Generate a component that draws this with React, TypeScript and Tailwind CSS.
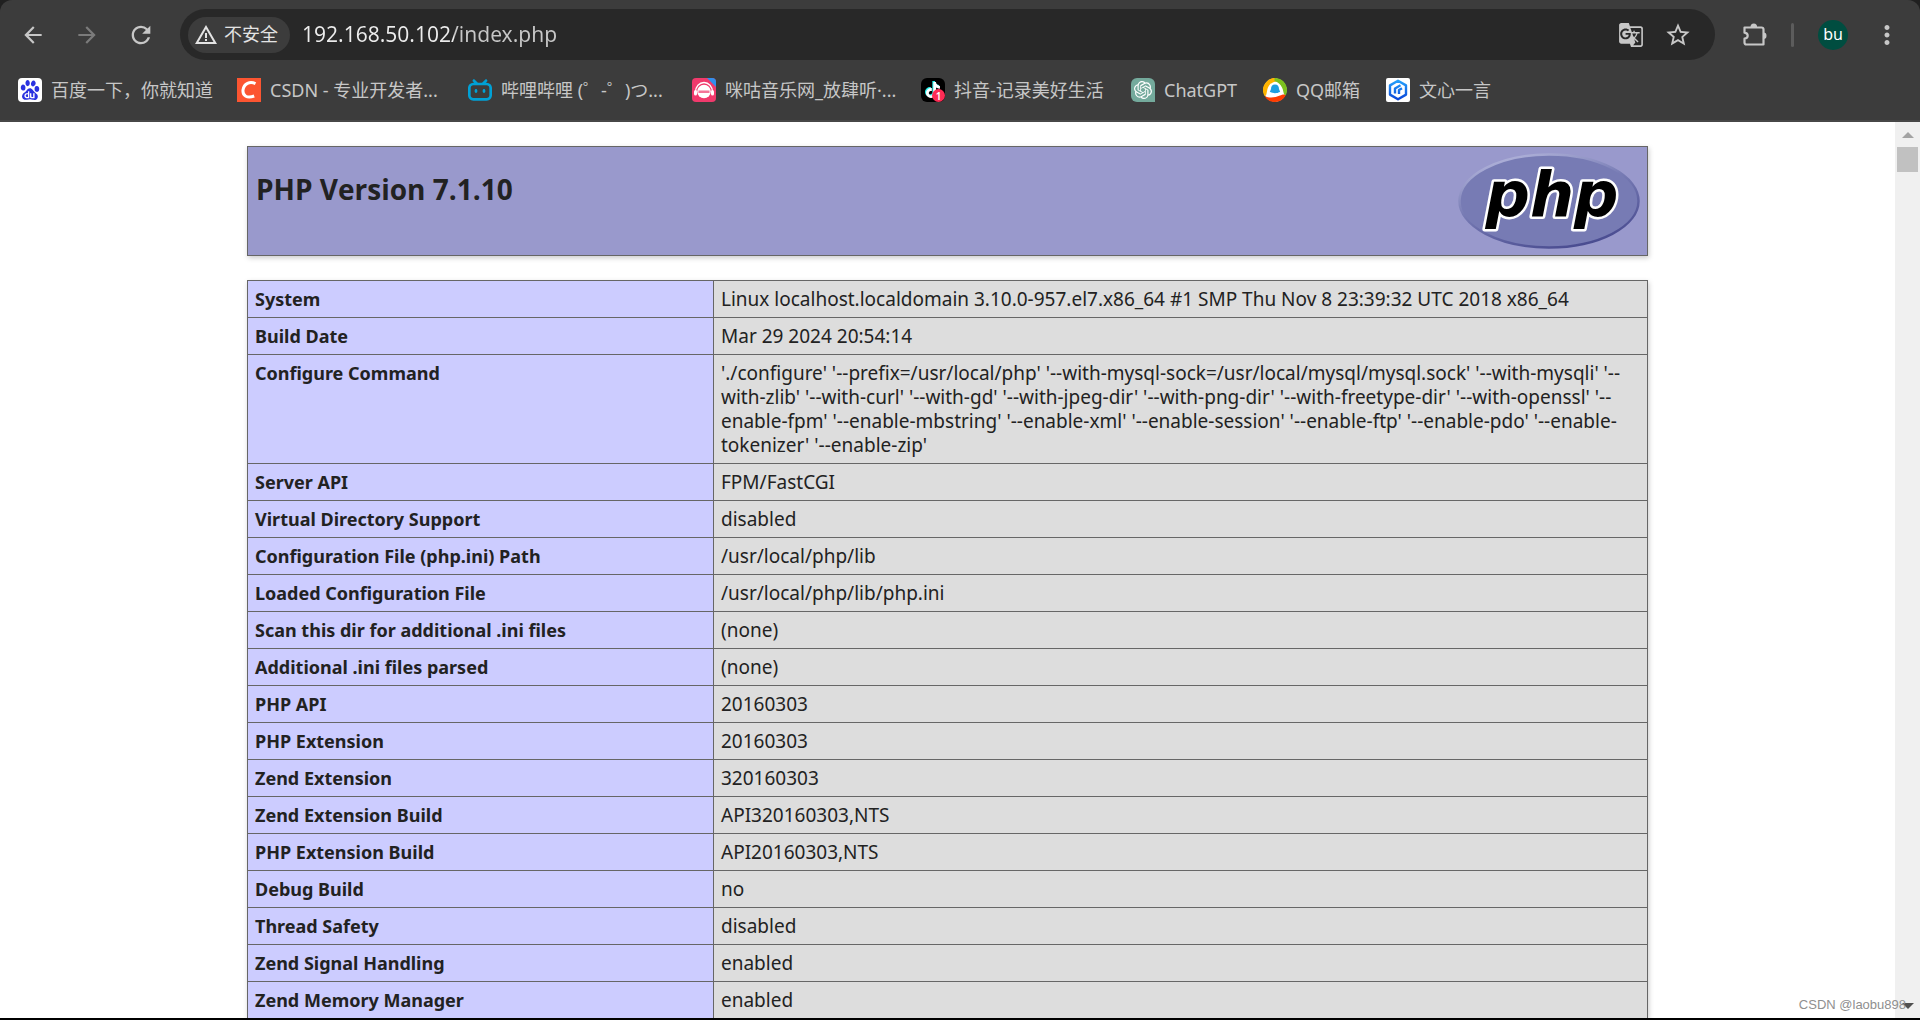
import React from "react";
import {
  MdArrowBack,
  MdArrowForward,
  MdGTranslate,
  MdMoreVert,
  MdRefresh,
  MdStarBorder,
  MdWarningAmber,
} from "react-icons/md";
import { SiBaidu, SiBilibili, SiOpenai, SiTiktok } from "react-icons/si";

const rows: [string, string[]][] = [
  ["System", ["Linux localhost.localdomain 3.10.0-957.el7.x86_64 #1 SMP Thu Nov 8 23:39:32 UTC 2018 x86_64"]],
  ["Build Date", ["Mar 29 2024 20:54:14"]],
  [
    "Configure Command",
    [
      "'./configure' '--prefix=/usr/local/php' '--with-mysql-sock=/usr/local/mysql/mysql.sock' '--with-mysqli' '--",
      "with-zlib' '--with-curl' '--with-gd' '--with-jpeg-dir' '--with-png-dir' '--with-freetype-dir' '--with-openssl' '--",
      "enable-fpm' '--enable-mbstring' '--enable-xml' '--enable-session' '--enable-ftp' '--enable-pdo' '--enable-",
      "tokenizer' '--enable-zip'",
    ],
  ],
  ["Server API", ["FPM/FastCGI"]],
  ["Virtual Directory Support", ["disabled"]],
  ["Configuration File (php.ini) Path", ["/usr/local/php/lib"]],
  ["Loaded Configuration File", ["/usr/local/php/lib/php.ini"]],
  ["Scan this dir for additional .ini files", ["(none)"]],
  ["Additional .ini files parsed", ["(none)"]],
  ["PHP API", ["20160303"]],
  ["PHP Extension", ["20160303"]],
  ["Zend Extension", ["320160303"]],
  ["Zend Extension Build", ["API320160303,NTS"]],
  ["PHP Extension Build", ["API20160303,NTS"]],
  ["Debug Build", ["no"]],
  ["Thread Safety", ["disabled"]],
  ["Zend Signal Handling", ["enabled"]],
  ["Zend Memory Manager", ["enabled"]],
];

function BaiduIcon() {
  return (
    <span className="flex size-6 items-center justify-center rounded-sm bg-white">
      <SiBaidu className="size-5 text-[#2a32e0]" />
    </span>
  );
}

function CsdnIcon() {
  return (
    <svg viewBox="0 0 24 24" className="size-6">
      <rect width="24" height="24" fill="#fc5531" />
      <path d="M18.5 5.6C13 2.8 6.8 5.4 6 12c-.6 6 4.2 8.6 11.2 6" fill="none" stroke="#fff" strokeWidth="3" />
    </svg>
  );
}

function MiguIcon() {
  return (
    <svg viewBox="0 0 24 24" className="size-6">
      <rect width="24" height="24" rx="4" fill="#f03a6c" />
      <path d="M15 0h5a4 4 0 0 1 4 4v5z" fill="#2f8fee" />
      <path d="M3.500 14a8.500 9.500 0 0 1 17 0" fill="none" stroke="#fff" strokeWidth="1.300" />
      <circle cx="12" cy="13.500" r="6.800" fill="#fff" />
      <rect x="2" y="12" width="3" height="5.500" rx="1.500" fill="#fff" />
      <rect x="19" y="12" width="3" height="5.500" rx="1.500" fill="#fff" />
      <rect x="6.500" y="12.500" width="11" height="2.500" fill="#f03a6c" opacity="0.7" />
    </svg>
  );
}

function DouyinIcon() {
  return (
    <span className="relative flex size-6 items-center justify-center rounded-md bg-black">
      <SiTiktok className="size-4 text-white drop-shadow-[-1px_-1px_0_#25f4ee]" />
      <span className="absolute right-0 bottom-0 flex size-[13px] items-center justify-center rounded-full bg-[#fe2c55] text-[10px] leading-none font-semibold text-white">
        1
      </span>
    </span>
  );
}

function ChatIcon() {
  return (
    <span className="flex size-6 items-center justify-center rounded-md rounded-br-none bg-[#74aa9c]">
      <SiOpenai className="size-[18px] text-white" />
    </span>
  );
}

function QQMailIcon() {
  return (
    <svg viewBox="0 0 24 24" className="size-6">
      <circle cx="12" cy="12" r="11.500" fill="#fff" />
      <path d="M14 .2A12 12 0 0 0 1.600 18C4 18.500 3.500 13 5 9.500 6.800 5.500 10 3.500 15 3.200z" fill="#ffb400" />
      <path d="M11.500 0a12 12 0 0 1 11.300 17.300C20.500 18 20.800 13 19 9.500 17.500 6.300 15 4 11.500 3.200z" fill="#7cc11e" />
      <path d="M1.600 18A12 12 0 0 0 22.500 17.800c-.5-2.300-3-1.300-5.500-.3-5 2-10 3-15.400.5z" fill="#ff3c00" />
      <path d="M12 6.500c-2.800 0-4 2-4 4.500l-1.200 3 1.500.3c.5 1.200 6.900 1.200 7.400 0l1.500-.3L16 11c0-2.500-1.200-4.500-4-4.500z" fill="#1e9fe0" />
    </svg>
  );
}

function WenxinIcon() {
  return (
    <svg viewBox="0 0 24 24" className="size-6">
      <defs>
        <linearGradient id="wx" x1="0" y1="0" x2="0" y2="1">
          <stop offset="0" stopColor="#25a0fb" />
          <stop offset="1" stopColor="#0a46d8" />
        </linearGradient>
      </defs>
      <rect width="24" height="24" rx="2" fill="#fff" />
      <path
        d="M12 2.800 4 7.400v9.200l8 4.600 8-4.600V7.400zM9 15.500V10.500l5.500-3.200M13 16v-4l3-1.800"
        fill="none"
        stroke="url(#wx)"
        strokeWidth="2.400"
        strokeLinejoin="round"
      />
    </svg>
  );
}

function PuzzleIcon() {
  return (
    <svg viewBox="0 0 26 26" className="size-[26px]">
      <path
        d="M3.500 5.500h17a2 2 0 0 1 2 2v15h-17a2 2 0 0 1-2-2v-3.800c2.200-.3 3.200-1.400 3.200-3s-1-2.700-3.200-3z"
        fill="none"
        stroke="currentColor"
        strokeWidth="2.200"
        strokeLinejoin="round"
      />
      <path d="M9.500 5a3.300 3.500 0 0 1 6.600 0zM22.500 10.500a3 3.300 0 0 1 0 6.600z" fill="currentColor" />
    </svg>
  );
}

const bookmarks = [
  { label: "百度一下，你就知道", width: "min-w-[162px]", icon: <BaiduIcon /> },
  { label: "CSDN - 专业开发者...", width: "min-w-[174px]", icon: <CsdnIcon /> },
  { label: "哔哩哔哩 (゜-゜)つ...", width: "min-w-[167px]", icon: <SiBilibili className="size-6 text-[#00a1d6]" /> },
  { label: "咪咕音乐网_放肆听·...", width: "min-w-[172px]", icon: <MiguIcon /> },
  { label: "抖音-记录美好生活", width: "min-w-[153px]", icon: <DouyinIcon /> },
  { label: "ChatGPT", width: "min-w-[75px]", icon: <ChatIcon /> },
  { label: "QQ邮箱", width: "min-w-[66px]", icon: <QQMailIcon /> },
  { label: "文心一言", width: "min-w-[72px]", icon: <WenxinIcon /> },
];

function PhpLogo() {
  return (
    <svg viewBox="0 0 182 96" className="h-24 w-[182px]" role="img" aria-label="PHP logo">
      <defs>
        <linearGradient id="rim" x1="0.2" y1="0" x2="0.7" y2="1">
          <stop offset="0" stopColor="#b4b6dc" />
          <stop offset="0.45" stopColor="#777bb4" />
          <stop offset="1" stopColor="#484a8f" />
        </linearGradient>
      </defs>
      <ellipse cx="91" cy="48" rx="89.500" ry="46.500" fill="#777bb4" stroke="url(#rim)" strokeWidth="2.500" />
      <text
        x="94"
        y="63"
        textAnchor="middle"
        className="font-['DejaVu_Sans',sans-serif] text-[62px] font-bold italic"
        fill="#000"
        stroke="#fff"
        strokeWidth="5"
        strokeLinejoin="round"
        paintOrder="stroke"
      >
        php
      </text>
    </svg>
  );
}

export default function App() {
  return (
    <div className="flex h-screen flex-col overflow-hidden border-b-2 border-black bg-white font-['Noto_Sans','Noto_Sans_CJK_SC',sans-serif]">
      <div className="bg-[#202020]">
        <header className="rounded-t-xl border-b-2 border-[#474747] bg-[#3c3c3c] text-[#c7c7c7]">
          <div className="flex items-center pt-[9px] pr-[18px] pl-5">
            <button aria-label="Back" className="mr-7">
              <MdArrowBack className="size-[26px]" />
            </button>
            <button aria-label="Forward" className="mr-[27px] text-[#7b7b7b]">
              <MdArrowForward className="size-[26px]" />
            </button>
            <button aria-label="Reload" className="mr-[25px]">
              <MdRefresh className="size-7" />
            </button>
            <div className="flex h-[51px] flex-1 items-center rounded-full bg-[#282828] pr-[23px] pl-2">
              <button className="mr-3 flex h-9 items-center gap-1.5 rounded-full bg-[#3c3c3c] pr-3 pl-1.5 text-[18px] text-[#e3e3e3]">
                <MdWarningAmber className="size-6" />
                不安全
              </button>
              <input
                aria-label="Address"
                className="min-w-0 flex-1 bg-[linear-gradient(90deg,#ececec_152px,#c7c7c7_152px)] bg-clip-text text-[21px] text-transparent outline-none"
                defaultValue="192.168.50.102/index.php"
              />
              <button aria-label="Translate" className="mr-5">
                <MdGTranslate className="size-[26px]" />
              </button>
              <button aria-label="Bookmark this page">
                <MdStarBorder className="size-7" />
              </button>
            </div>
            <button aria-label="Extensions" className="ml-[26px]">
              <PuzzleIcon />
            </button>
            <div className="mx-6 h-6 w-[3px] rounded-full bg-[#5c5c5c]" />
            <button className="flex size-[30px] items-center justify-center rounded-full bg-[#004d40] pb-0.5 text-[16px] text-white">
              bu
            </button>
            <button aria-label="Menu" className="ml-6">
              <MdMoreVert className="size-[30px]" />
            </button>
          </div>
          <nav className="flex h-[60px] items-center gap-6 pl-[18px] text-[18px] leading-6 whitespace-nowrap">
            {bookmarks.map((b) => (
              <a key={b.label} href="#" className="flex items-center gap-[9px]">
                {b.icon}
                <span className={b.width}>{b.label}</span>
              </a>
            ))}
          </nav>
        </header>
      </div>
      <div className="flex min-h-0 flex-1">
        <main className="flex-1 overflow-hidden pt-6 text-[18px] leading-6 text-[#222]">
          <div className="mx-auto flex max-w-[1401px] justify-between border border-[#666] bg-[#9999cc] py-1.5 pr-[7px] pl-2 shadow-[1px_2px_5px_#ccc]">
            <h1 className="pt-[18px] font-['Open_Sans',sans-serif] text-[28px] leading-9 font-bold">PHP Version 7.1.10</h1>
            <PhpLogo />
          </div>
          <table className="mx-auto mt-6 w-full max-w-[1401px] border-collapse shadow-[1px_2px_5px_#ccc]">
            <tbody>
              {rows.map(([name, lines]) => (
                <tr key={name}>
                  <th
                    scope="row"
                    className="w-[466px] border border-[#666] bg-[#ccccff] px-[7px] py-1.5 text-left align-top font-bold"
                  >
                    {name}
                  </th>
                  <td className="border border-[#666] bg-[#dddddd] px-[7px] py-1.5 align-top text-[19px] leading-6 whitespace-nowrap">
                    {lines.map((line) => (
                      <div key={line}>{line}</div>
                    ))}
                  </td>
                </tr>
              ))}
            </tbody>
          </table>
        </main>
        <div className="relative flex w-[25px] flex-col items-center bg-[#f0f0f0]">
          <svg viewBox="0 0 12 6" className="mt-[10px] h-1.5 w-3">
            <path d="M0 6 6 0l6 6z" fill="#a3a3a3" />
          </svg>
          <div className="mt-[9px] h-[25px] w-[21px] bg-[#c1c1c1]" />
          <svg viewBox="0 0 12 6" className="mt-auto mb-[9px] h-1.5 w-3">
            <path d="M0 0h12L6 6z" fill="#505050" />
          </svg>
          <span className="absolute right-[14px] bottom-[3px] font-['Liberation_Sans',sans-serif] text-[13px] leading-5 whitespace-nowrap text-[#8f8f8f]">
            CSDN @laobu898
          </span>
        </div>
      </div>
    </div>
  );
}
